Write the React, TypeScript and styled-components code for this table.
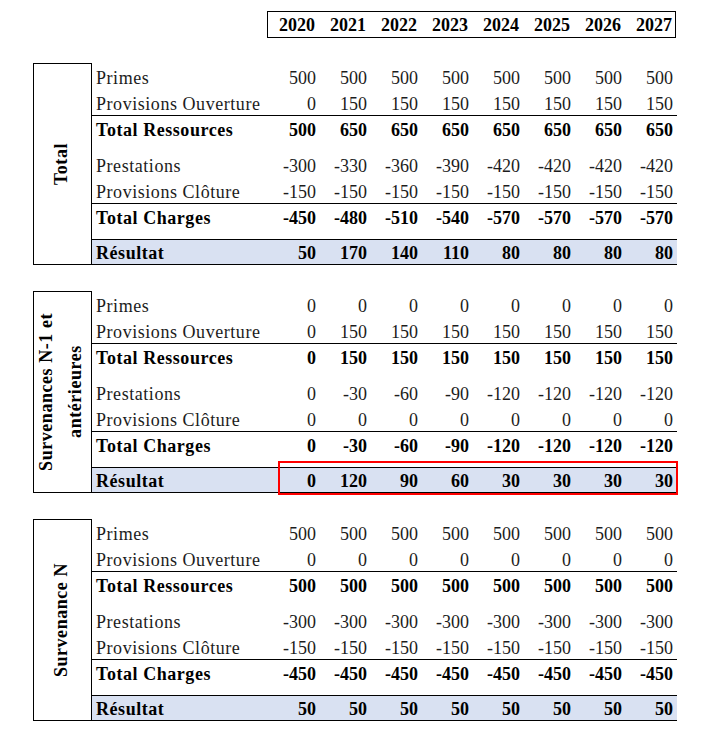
import React from 'react';
import styled, { createGlobalStyle } from 'styled-components';

const GlobalStyle = createGlobalStyle`
	body {
		margin: 0;
		background: #fff;
		color: #000;
		font-family: 'Liberation Serif', 'Times New Roman', serif;
	}
`;

const YEARS = [2020, 2021, 2022, 2023, 2024, 2025, 2026, 2027];
const COLS = '177px repeat(8, 51px)';

const Page = styled.div`
	width: 708px;
	padding: 11px 0 0 33px;
	box-sizing: border-box;
	display: flex;
	flex-direction: column;
	gap: 26px;
	font-size: 18px;
	letter-spacing: 0.55px;
`;

const HeaderRow = styled.div`
	display: flex;
	padding-left: 235px;
	margin-bottom: -1px;
`;

const YearBox = styled.div`
	display: grid;
	grid-template-columns: repeat(8, 51px);
	height: 27px;
	border: 1px solid #000;
	box-sizing: border-box;
	width: 409px;
	margin-left: -1px;
`;

const Year = styled.div`
	font-weight: bold;
	text-align: right;
	padding-right: 4px;
	line-height: 23px;
	padding-top: 2px;
	letter-spacing: 0;
`;

const Section = styled.div`
	display: flex;
	height: 202px;
`;

const LabelBox = styled.div`
	width: 59px;
	border: 1px solid #000;
	box-sizing: border-box;
	display: flex;
	align-items: center;
	justify-content: center;
	padding-right: 3px;
`;

const SideLabel = styled.div`
	writing-mode: vertical-rl;
	transform: rotate(180deg);
	font-weight: bold;
	text-align: center;
	line-height: 29px;
`;

const Body = styled.div`
	display: flex;
	flex-direction: column;
	width: 585px;
`;

type Kind = 'plain' | 'total' | 'result';

const Row = styled.div<{ $kind: Kind }>`
	position: relative;
	display: grid;
	grid-template-columns: ${COLS};
	height: 26px;
	box-sizing: border-box;
	font-weight: ${(p) => (p.$kind === 'plain' ? 'normal' : 'bold')};
	color: ${(p) => (p.$kind === 'plain' ? '#1c1c1c' : '#000')};
	border-top: ${(p) => (p.$kind === 'plain' ? 'none' : '1px solid #000')};
	border-bottom: ${(p) => (p.$kind === 'result' ? '1px solid #000' : 'none')};
	background: ${(p) => (p.$kind === 'result' ? '#d9e1f2' : 'transparent')};
	margin-top: ${(p) => (p.$kind === 'result' ? '10px' : '0')};
`;

const Spacer = styled.div`
	height: 10px;
`;

const Cell = styled.div<{ $kind: Kind; $num?: boolean }>`
	white-space: nowrap;
	padding-top: ${(p) => (p.$kind === 'result' ? '2px' : p.$kind === 'total' ? '3px' : '4px')};
	line-height: 22px;
	padding-left: ${(p) => (p.$num ? '0' : '4px')};
	padding-right: ${(p) => (p.$num ? '4px' : '0')};
	text-align: ${(p) => (p.$num ? 'right' : 'left')};
	letter-spacing: ${(p) => (p.$num ? '0' : 'inherit')};
`;

const Highlight = styled.div`
	position: absolute;
	top: -7px;
	bottom: -3px;
	left: 186px;
	right: -1px;
	border: 2px solid #ff0000;
	pointer-events: none;
`;

interface IRow {
	label: string;
	kind: Kind;
	values: number[];
}

interface ISection {
	title: string[];
	rows: IRow[];
	highlight?: boolean;
}

const rep = (v: number) => YEARS.map(() => v);

const SECTIONS: ISection[] = [
	{
		title: ['Total'],
		rows: [
			{ label: 'Primes', kind: 'plain', values: rep(500) },
			{ label: 'Provisions Ouverture', kind: 'plain', values: [0, 150, 150, 150, 150, 150, 150, 150] },
			{ label: 'Total Ressources', kind: 'total', values: [500, 650, 650, 650, 650, 650, 650, 650] },
			{ label: 'Prestations', kind: 'plain', values: [-300, -330, -360, -390, -420, -420, -420, -420] },
			{ label: 'Provisions Clôture', kind: 'plain', values: rep(-150) },
			{ label: 'Total Charges', kind: 'total', values: [-450, -480, -510, -540, -570, -570, -570, -570] },
			{ label: 'Résultat', kind: 'result', values: [50, 170, 140, 110, 80, 80, 80, 80] },
		],
	},
	{
		title: ['Survenances N-1 et', 'antérieures'],
		highlight: true,
		rows: [
			{ label: 'Primes', kind: 'plain', values: rep(0) },
			{ label: 'Provisions Ouverture', kind: 'plain', values: [0, 150, 150, 150, 150, 150, 150, 150] },
			{ label: 'Total Ressources', kind: 'total', values: [0, 150, 150, 150, 150, 150, 150, 150] },
			{ label: 'Prestations', kind: 'plain', values: [0, -30, -60, -90, -120, -120, -120, -120] },
			{ label: 'Provisions Clôture', kind: 'plain', values: rep(0) },
			{ label: 'Total Charges', kind: 'total', values: [0, -30, -60, -90, -120, -120, -120, -120] },
			{ label: 'Résultat', kind: 'result', values: [0, 120, 90, 60, 30, 30, 30, 30] },
		],
	},
	{
		title: ['Survenance N'],
		rows: [
			{ label: 'Primes', kind: 'plain', values: rep(500) },
			{ label: 'Provisions Ouverture', kind: 'plain', values: rep(0) },
			{ label: 'Total Ressources', kind: 'total', values: rep(500) },
			{ label: 'Prestations', kind: 'plain', values: rep(-300) },
			{ label: 'Provisions Clôture', kind: 'plain', values: rep(-150) },
			{ label: 'Total Charges', kind: 'total', values: rep(-450) },
			{ label: 'Résultat', kind: 'result', values: rep(50) },
		],
	},
];

const Block: React.FC<{ section: ISection }> = ({ section }) => (
	<Section>
		<LabelBox>
			<SideLabel>
				{section.title.map((t) => (
					<div key={t}>{t}</div>
				))}
			</SideLabel>
		</LabelBox>
		<Body>
			{section.rows.map((row, i) => (
				<React.Fragment key={row.label}>
					{i === 3 && <Spacer />}
					<Row $kind={row.kind}>
						<Cell $kind={row.kind}>{row.label}</Cell>
						{row.values.map((v, j) => (
							<Cell key={j} $kind={row.kind} $num>
								{v}
							</Cell>
						))}
						{section.highlight && row.kind === 'result' && <Highlight />}
					</Row>
				</React.Fragment>
			))}
		</Body>
	</Section>
);

const App: React.FC = () => (
	<>
		<GlobalStyle />
		<Page>
			<HeaderRow>
				<YearBox>
					{YEARS.map((y) => (
						<Year key={y}>{y}</Year>
					))}
				</YearBox>
			</HeaderRow>
			{SECTIONS.map((s) => (
				<Block key={s.title[0]} section={s} />
			))}
		</Page>
	</>
);

export default App;
